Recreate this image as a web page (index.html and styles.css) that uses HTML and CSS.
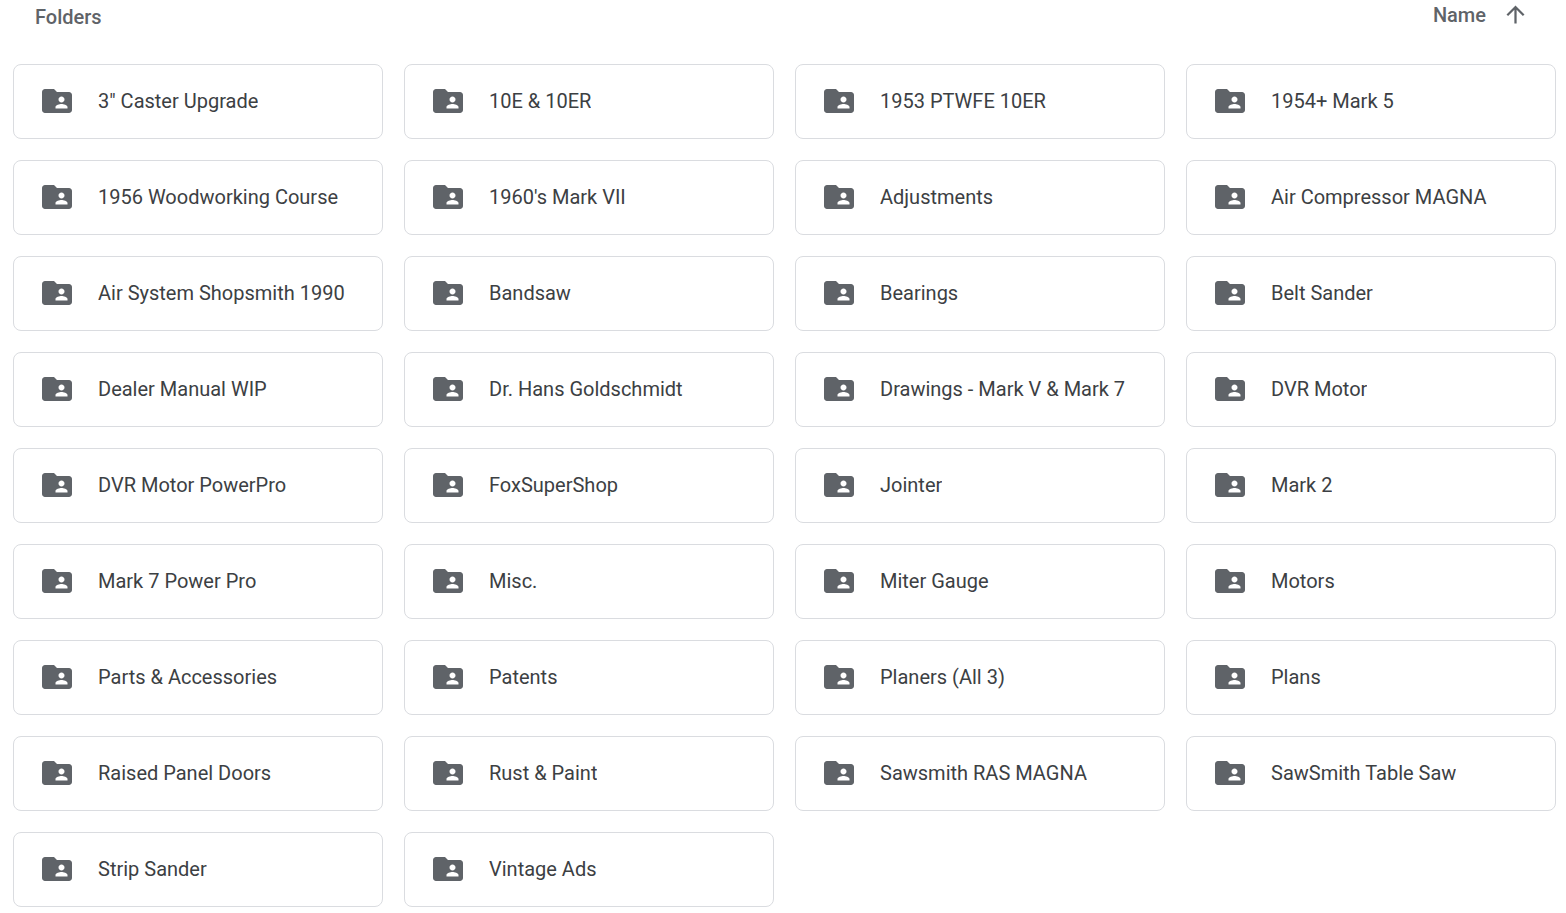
FILE: index.html
```
<!DOCTYPE html>
<html lang="en">
  <head>
    <meta charset="UTF-8" />
    <meta name="viewport" content="width=device-width, initial-scale=1.0" />
    <title>Folders</title>
    <link rel="stylesheet" href="styles.css">
  </head>
  <body>
    <!-- Folder icon shared by every card -->
    <svg class="sprite" aria-hidden="true">
      <symbol id="shared-folder" viewBox="0 0 24 24">
        <path d="M20 6h-8l-2-2H4c-1.100 0-1.990.9-1.990 2L2 18c0 1.100.9 2 2 2h16c1.100 0 2-.9 2-2V8c0-1.100-.9-2-2-2zm-5 3c1.100 0 2 .9 2 2s-.9 2-2 2-2-.9-2-2 .9-2 2-2zm4 8h-8v-1c0-1.330 2.670-2 4-2s4 .67 4 2v1z" />
      </symbol>
    </svg>

    <header class="toolbar">
      <h2 class="title">Folders</h2>
      <button class="sort" type="button">
        Name
        <svg class="arrow" viewBox="0 0 24 24" aria-hidden="true">
          <path d="M4 12l1.410 1.410L11 7.830V20h2V7.830l5.580 5.590L20 12l-8-8-8 8z" />
        </svg>
      </button>
    </header>

    <main class="folders">
      <a class="folder" href="#"><svg class="icon"><use href="#shared-folder" /></svg><span class="name">3" Caster Upgrade</span></a>
      <a class="folder" href="#"><svg class="icon"><use href="#shared-folder" /></svg><span class="name">10E &amp; 10ER</span></a>
      <a class="folder" href="#"><svg class="icon"><use href="#shared-folder" /></svg><span class="name">1953 PTWFE 10ER</span></a>
      <a class="folder" href="#"><svg class="icon"><use href="#shared-folder" /></svg><span class="name">1954+ Mark 5</span></a>
      <a class="folder" href="#"><svg class="icon"><use href="#shared-folder" /></svg><span class="name">1956 Woodworking Course</span></a>
      <a class="folder" href="#"><svg class="icon"><use href="#shared-folder" /></svg><span class="name">1960's Mark VII</span></a>
      <a class="folder" href="#"><svg class="icon"><use href="#shared-folder" /></svg><span class="name">Adjustments</span></a>
      <a class="folder" href="#"><svg class="icon"><use href="#shared-folder" /></svg><span class="name">Air Compressor MAGNA</span></a>
      <a class="folder" href="#"><svg class="icon"><use href="#shared-folder" /></svg><span class="name">Air System Shopsmith 1990</span></a>
      <a class="folder" href="#"><svg class="icon"><use href="#shared-folder" /></svg><span class="name">Bandsaw</span></a>
      <a class="folder" href="#"><svg class="icon"><use href="#shared-folder" /></svg><span class="name">Bearings</span></a>
      <a class="folder" href="#"><svg class="icon"><use href="#shared-folder" /></svg><span class="name">Belt Sander</span></a>
      <a class="folder" href="#"><svg class="icon"><use href="#shared-folder" /></svg><span class="name">Dealer Manual WIP</span></a>
      <a class="folder" href="#"><svg class="icon"><use href="#shared-folder" /></svg><span class="name">Dr. Hans Goldschmidt</span></a>
      <a class="folder" href="#"><svg class="icon"><use href="#shared-folder" /></svg><span class="name">Drawings - Mark V &amp; Mark 7</span></a>
      <a class="folder" href="#"><svg class="icon"><use href="#shared-folder" /></svg><span class="name">DVR Motor</span></a>
      <a class="folder" href="#"><svg class="icon"><use href="#shared-folder" /></svg><span class="name">DVR Motor PowerPro</span></a>
      <a class="folder" href="#"><svg class="icon"><use href="#shared-folder" /></svg><span class="name">FoxSuperShop</span></a>
      <a class="folder" href="#"><svg class="icon"><use href="#shared-folder" /></svg><span class="name">Jointer</span></a>
      <a class="folder" href="#"><svg class="icon"><use href="#shared-folder" /></svg><span class="name">Mark 2</span></a>
      <a class="folder" href="#"><svg class="icon"><use href="#shared-folder" /></svg><span class="name">Mark 7 Power Pro</span></a>
      <a class="folder" href="#"><svg class="icon"><use href="#shared-folder" /></svg><span class="name">Misc.</span></a>
      <a class="folder" href="#"><svg class="icon"><use href="#shared-folder" /></svg><span class="name">Miter Gauge</span></a>
      <a class="folder" href="#"><svg class="icon"><use href="#shared-folder" /></svg><span class="name">Motors</span></a>
      <a class="folder" href="#"><svg class="icon"><use href="#shared-folder" /></svg><span class="name">Parts &amp; Accessories</span></a>
      <a class="folder" href="#"><svg class="icon"><use href="#shared-folder" /></svg><span class="name">Patents</span></a>
      <a class="folder" href="#"><svg class="icon"><use href="#shared-folder" /></svg><span class="name">Planers (All 3)</span></a>
      <a class="folder" href="#"><svg class="icon"><use href="#shared-folder" /></svg><span class="name">Plans</span></a>
      <a class="folder" href="#"><svg class="icon"><use href="#shared-folder" /></svg><span class="name">Raised Panel Doors</span></a>
      <a class="folder" href="#"><svg class="icon"><use href="#shared-folder" /></svg><span class="name">Rust &amp; Paint</span></a>
      <a class="folder" href="#"><svg class="icon"><use href="#shared-folder" /></svg><span class="name">Sawsmith RAS MAGNA</span></a>
      <a class="folder" href="#"><svg class="icon"><use href="#shared-folder" /></svg><span class="name">SawSmith Table Saw</span></a>
      <a class="folder" href="#"><svg class="icon"><use href="#shared-folder" /></svg><span class="name">Strip Sander</span></a>
      <a class="folder" href="#"><svg class="icon"><use href="#shared-folder" /></svg><span class="name">Vintage Ads</span></a>
    </main>
  </body>
</html>
```
FILE: styles.css
```
* {
  box-sizing: border-box;
}
body {
  margin: 0;
  padding: 0 10px 6px 13px;
  background-color: #fff;
  color: #3c4043;
  font-family: Roboto, sans-serif;
  font-size: 20px;
  font-weight: 400;
  line-height: 24px;
}
.sprite {
  display: none;
}
.toolbar {
  display: flex;
  align-items: flex-start;
  justify-content: space-between;
  padding: 0 27px 0 22px;
  margin-bottom: 35px;
  color: #5f6368;
}
.title {
  margin: 0;
  padding-top: 5px;
  font-size: 20px;
  font-weight: 500;
}
.sort {
  display: flex;
  align-items: center;
  gap: 16px;
  padding: 1px 0;
  border: 0;
  background: none;
  color: inherit;
  font: inherit;
  font-weight: 500;
  cursor: pointer;
}
.arrow {
  width: 27px;
  height: 27px;
  fill: #5f6368;
}
.folders {
  display: grid;
  grid-template-columns: repeat(4, 1fr);
  gap: 21px;
}
.folder {
  display: flex;
  align-items: center;
  gap: 23px;
  min-width: 0;
  height: 75px;
  padding: 0 25px 1px;
  border: 1px solid #dadce0;
  border-radius: 8px;
  color: inherit;
  text-decoration: none;
}
.icon {
  flex: none;
  width: 36px;
  height: 36px;
  fill: #5f6368;
}
.name {
  overflow: hidden;
  text-overflow: ellipsis;
  white-space: nowrap;
}
```
